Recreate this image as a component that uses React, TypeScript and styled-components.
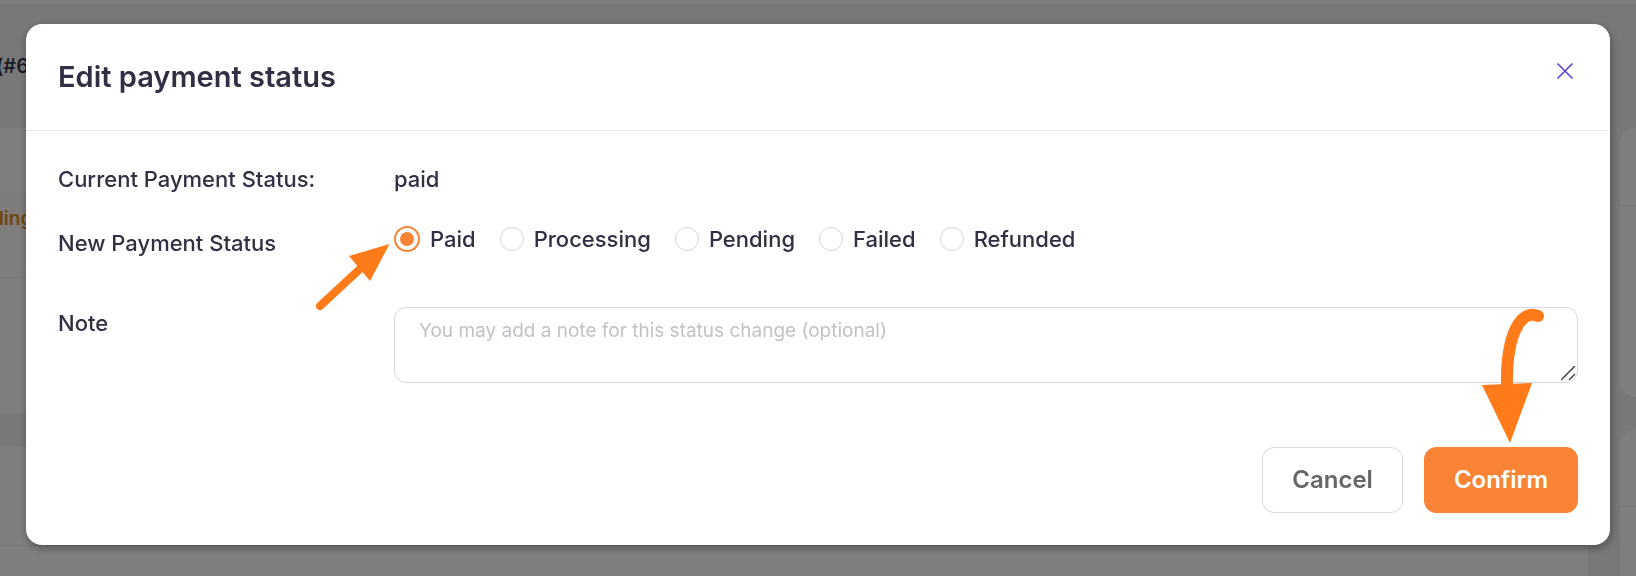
import React, { useState } from "react";
import styled, { createGlobalStyle } from "styled-components";

const GlobalStyle = createGlobalStyle`
  *, *::before, *::after { box-sizing: border-box; }
  body {
    margin: 0;
    background: #f0f0f1;
    color: #2f3044;
    font-family: Inter, "Liberation Sans", sans-serif;
  }
`;

/* Order page that sits behind the dialog */

const Page = styled.div`
  display: flex;
  flex-direction: column;
  height: 100vh;
  overflow: hidden;
`;

const TopBar = styled.div`
  flex: none;
  height: 4px;
  background: #ffffff;
`;

const OrderHeading = styled.h1`
  flex: none;
  display: flex;
  align-items: center;
  height: 124px;
  margin: 0 0 0 -4px;
  font-size: 20px;
  line-height: 24px;
  font-weight: 500;
`;

const Columns = styled.div`
  flex: 1;
  display: grid;
  grid-template-columns: minmax(0, 1fr) 16px;
  column-gap: 32px;
`;

const Column = styled.div`
  display: flex;
  flex-direction: column;
  gap: 32px;
`;

const Card = styled.section<{ $side?: boolean; $grow?: boolean }>`
  flex: ${(p) => (p.$grow ? "1" : "none")};
  background: #ffffff;
  border-radius: ${(p) => {
    if (p.$side) return p.$grow ? "16px 0 0 0" : "16px 0 0 16px";
    return p.$grow ? "0 16px 0 0" : "0 16px 16px 0";
  }};
`;

const CardRow = styled.div<{ $height: number; $line?: boolean; $tint?: boolean }>`
  display: flex;
  align-items: center;
  height: ${(p) => p.$height}px;
  border-bottom: ${(p) => (p.$line ? "1px solid #eaecf0" : "0")};
  background: ${(p) => (p.$tint ? "linear-gradient(#fffaf6, #ffffff)" : "transparent")};
`;

const StatusBadge = styled.span`
  align-self: flex-start;
  margin: 14px 0 0 -8px;
  color: #e08a1c;
  font-size: 19px;
  line-height: 24px;
  font-weight: 600;
`;

/* Dialog */

const Overlay = styled.div`
  position: fixed;
  inset: 0;
  padding: 24px 26px;
  background: rgba(0, 0, 0, 0.5);
`;

const Dialog = styled.div`
  background: #ffffff;
  border-radius: 16px;
  box-shadow: 1px 3px 8px rgba(0, 0, 0, 0.35);
`;

const DialogHeader = styled.header`
  display: flex;
  justify-content: space-between;
  align-items: flex-start;
  padding: 32px;
  border-bottom: 1px solid #e6e7ea;
`;

const Title = styled.h2`
  margin: 0;
  font-size: 29px;
  line-height: 42px;
  font-weight: 600;
`;

const CloseButton = styled.button`
  display: flex;
  padding: 4px;
  margin-right: -2px;
  border: 0;
  background: none;
  color: #6040d0;
  cursor: pointer;
`;

const Form = styled.form`
  padding: 32px;
`;

const Row = styled.div<{ $gap: number }>`
  display: grid;
  grid-template-columns: 336px minmax(0, 1fr);
  align-items: start;
  margin-bottom: ${(p) => p.$gap}px;
`;

const Label = styled.label`
  font-size: 22px;
  line-height: 32px;
  font-weight: 500;
`;

const Value = styled.span`
  font-size: 22px;
  line-height: 32px;
  font-weight: 500;
`;

const Options = styled.div`
  position: relative;
  display: flex;
  flex-wrap: wrap;
  gap: 24px;
`;

const Option = styled.label`
  display: flex;
  align-items: center;
  gap: 10px;
  height: 24px;
  font-size: 22px;
  line-height: 24px;
  font-weight: 500;
  cursor: pointer;
`;

const Radio = styled.input`
  appearance: none;
  display: grid;
  place-content: center;
  flex: none;
  width: 24px;
  height: 24px;
  margin: 0;
  border: 1px solid #d6d7db;
  border-radius: 50%;
  background: #ffffff;

  &:checked {
    width: 26px;
    height: 26px;
    border: 2px solid #f98435;
  }

  &:checked::before {
    content: "";
    width: 14px;
    height: 14px;
    border-radius: 50%;
    background: #f98435;
  }
`;

const NoteBox = styled.div`
  position: relative;
  display: flex;
`;

const NoteInput = styled.textarea`
  flex: 1;
  height: 76px;
  padding: 11px 24px;
  border: 1px solid #d6d7db;
  border-radius: 12px;
  background: #ffffff;
  color: inherit;
  font-family: inherit;
  font-size: 19px;
  line-height: 24px;
  resize: none;

  &::placeholder {
    color: #bfc3c6;
    opacity: 1;
  }
`;

const ResizeGrip = styled.svg`
  position: absolute;
  right: 1px;
  bottom: 1px;
  pointer-events: none;
`;

const Actions = styled.div`
  display: flex;
  justify-content: flex-end;
  gap: 21px;
`;

const ActionSlot = styled.div`
  position: relative;
`;

const Button = styled.button<{ $primary?: boolean }>`
  height: 66px;
  padding: 0 29px;
  border: 1px solid ${(p) => (p.$primary ? "#f98435" : "#d6d7db")};
  border-radius: 12px;
  background: ${(p) => (p.$primary ? "#f98435" : "#ffffff")};
  color: ${(p) => (p.$primary ? "#ffffff" : "#666666")};
  font-family: inherit;
  font-size: 24px;
  line-height: 32px;
  font-weight: 600;
  cursor: pointer;
`;

/* Tutorial arrows laid over the dialog */

const OptionArrow = styled.svg`
  position: absolute;
  top: 12px;
  left: -78px;
  pointer-events: none;
`;

const ConfirmArrow = styled.svg`
  position: absolute;
  right: 33px;
  bottom: calc(100% + 3px);
  pointer-events: none;
`;

const STATUSES = ["Paid", "Processing", "Pending", "Failed", "Refunded"];

export default function App() {
  const [status, setStatus] = useState("Paid");
  const [note, setNote] = useState("");

  return (
    <>
      <GlobalStyle />
      <Page>
        <TopBar />
        <OrderHeading>(#6</OrderHeading>
        <Columns>
          <Column>
            <Card>
              <CardRow $height={65} />
              <CardRow $height={85} $line $tint>
                <StatusBadge>ding</StatusBadge>
              </CardRow>
              <CardRow $height={136} />
            </Card>
            <Card $grow>
              <CardRow $height={100} $line />
            </Card>
          </Column>
          <Column>
            <Card $side>
              <CardRow $height={78} $line />
              <CardRow $height={191} />
            </Card>
            <Card $side $grow>
              <CardRow $height={78} $line />
            </Card>
          </Column>
        </Columns>
      </Page>

      <Overlay>
        <Dialog role="dialog" aria-modal="true" aria-labelledby="dialog-title">
          <DialogHeader>
            <Title id="dialog-title">Edit payment status</Title>
            <CloseButton type="button" aria-label="Close">
              <svg width="22" height="22" viewBox="0 0 22 22" fill="none" stroke="currentColor" strokeWidth="1.6">
                <path d="M3.500 3.500 18.500 18.500M18.500 3.500 3.500 18.500" />
              </svg>
            </CloseButton>
          </DialogHeader>

          <Form onSubmit={(e) => e.preventDefault()}>
            <Row $gap={32}>
              <Value>Current Payment Status:</Value>
              <Value>paid</Value>
            </Row>

            <Row $gap={48}>
              <Label as="span" id="new-status">New Payment Status</Label>
              <Options role="radiogroup" aria-labelledby="new-status">
                {STATUSES.map((name) => (
                  <Option key={name}>
                    <Radio
                      type="radio"
                      name="status"
                      value={name}
                      checked={status === name}
                      onChange={() => setStatus(name)}
                    />
                    {name}
                  </Option>
                ))}
                <OptionArrow width="80" height="72" viewBox="0 0 80 72" aria-hidden="true">
                  <path d="M4 67 45 29" stroke="#ff7a18" strokeWidth="8" strokeLinecap="round" />
                  <path d="M73.500 5 33 17 54 42Z" fill="#ff7a18" />
                </OptionArrow>
              </Options>
            </Row>

            <Row $gap={64}>
              <Label htmlFor="note">Note</Label>
              <NoteBox>
                <NoteInput
                  id="note"
                  value={note}
                  onChange={(e) => setNote(e.target.value)}
                  placeholder="You may add a note for this status change (optional)"
                />
                <ResizeGrip width="16" height="16" viewBox="0 0 16 16" stroke="#444444" strokeWidth="1.5" aria-hidden="true">
                  <path d="M0 14 14 0M8 14 14 8" />
                </ResizeGrip>
              </NoteBox>
            </Row>

            <Actions>
              <Button type="button">Cancel</Button>
              <ActionSlot>
                <Button type="submit" $primary>Confirm</Button>
                <ConfirmArrow width="64" height="138" viewBox="0 0 64 138" fill="none" aria-hidden="true">
                  <path d="M57 10C40 3 25 28 26 80" stroke="#ff7a18" strokeWidth="12" />
                  <circle cx="57" cy="10" r="6" fill="#ff7a18" />
                  <path d="M1 79 51 77 29 137Z" fill="#ff7a18" />
                </ConfirmArrow>
              </ActionSlot>
            </Actions>
          </Form>
        </Dialog>
      </Overlay>
    </>
  );
}
